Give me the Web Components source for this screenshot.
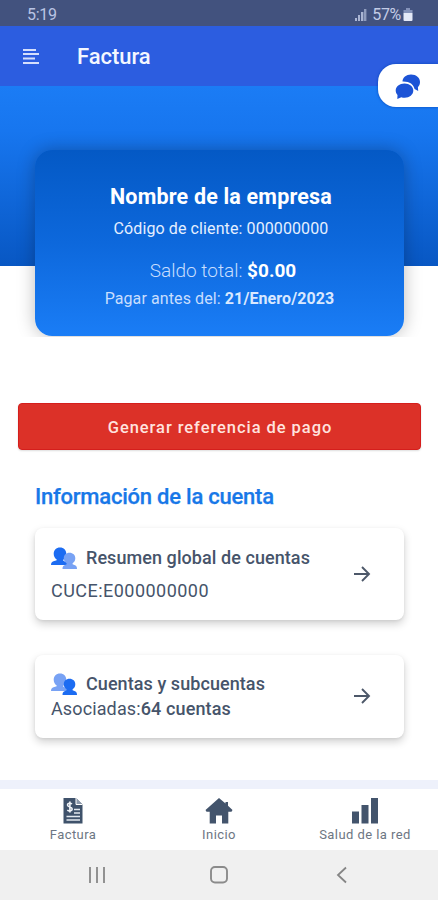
<!DOCTYPE html>
<html lang="es"><head><meta charset="utf-8"><title>Factura</title>
<style>
body{margin:0;width:438px;height:900px;overflow:hidden;background:#fff;font-family:Roboto,"Liberation Sans",sans-serif}
</style></head><body><billing-app></billing-app>
<script>
const define=(name,html)=>customElements.define(name,class extends HTMLElement{
  constructor(){super();const t=document.createElement('template');t.innerHTML=html;
  this.attachShadow({mode:'open'}).append(t.content.cloneNode(true));}
});

define('status-bar',`<style>
:host{display:flex;height:26px;box-sizing:border-box;padding:3px 25px 0 27px;background:#42527e;color:#b9c4e4;justify-content:space-between;align-items:center;font-size:16px;line-height:23px}
.time{letter-spacing:-.3px}.right{display:flex;align-items:center;gap:5px;letter-spacing:-.3px;color:#c3cce6}
.pct{display:flex;align-items:center;gap:2px}
svg{display:block}
</style><span class="time">5:19</span><span class="right">
<svg width="13" height="13" viewBox="0 0 13 13" fill="#aab5d3"><path d="M1 10h2v3H1zM4 7h2v6H4zM7 4h2.400v9H7z"/><path d="M10 1h2.400v12H10z" opacity=".75"/></svg>
<span class="pct"><span>57%</span><svg width="10" height="13" viewBox="0 0 10 13"><path d="M3 0h4v2h2.500v3h-9V2H3z" fill="#8492b9"/><path d="M.5 5h9v7q0 1-1 1h-7q-1 0-1-1z" fill="#e4e9f7"/></svg></span></span>`);

define('app-header',`<style>
:host{display:flex;position:relative;z-index:2;height:60px;box-sizing:border-box;padding:1px 0 0 22px;align-items:center;background:#2c5de0;color:#fff}
h1{margin:0 0 0 37px;font-size:22px;line-height:28px;font-weight:500;letter-spacing:-.05px;color:#f4f7ff}
svg{display:block}
.chat{position:absolute;right:0;top:38px;width:60px;height:43px;box-sizing:border-box;background:#fff;border-radius:18px 0 0 18px;padding:9px 0 0 17px;box-shadow:0 0 3px #0645b8}
</style><svg width="18" height="18" viewBox="0 0 18 18" fill="#d5dffc"><path d="M1 1h13v2H1zM1 5h16v2H1zM1 9.500h12v2H1zM1 14h16v2H1z"/></svg><h1><slot></slot></h1>
<div class="chat"><svg width="26" height="27" viewBox="0 0 26 27" fill="#1c53d6"><path d="M16 1.500c5.300 0 9 3.300 9 7.500 0 2.200-.8 3.800-2.100 5.200l.3 3.800-3.600-2C18.500 11.500 14.800 8.300 7.500 8.500 7.600 4.500 11.200 1.500 16 1.500z"/><path d="M9.500 10.500c5 0 8.800 2.900 8.800 7 0 4.200-3.800 7.200-8.600 7.200-1.300 0-2.300-.1-3.400-.5L2.300 26l.2-4.100C1.400 20.700.7 19.200.7 17.500c0-4.100 3.800-7 8.800-7z"/></svg></div>`);

define('balance-hero',`<style>
:host{display:block;height:251px;box-sizing:border-box;padding:64px 34px 0 35px;overflow:hidden;background:linear-gradient(#1b7cf5 0,#1776ef 25%,#0857c3 100%) 0 0/100% 180px no-repeat}
article{height:186px;box-sizing:border-box;padding:34px 0 0 3px;border-radius:17px;background:linear-gradient(#0459c5,#0d68dc 50%,#1a7df6);box-shadow:0 0 18px #0004;text-align:center;color:#fff}
.name{font-size:21.500px;line-height:26px;font-weight:700;letter-spacing:.18px}
.code{font-size:16px;line-height:20px;margin-top:9px;color:#e5efff;letter-spacing:.1px}
.total{font-size:19px;line-height:24px;margin-top:20px;padding-left:4px;color:#c8defe;font-weight:300}
.due{font-size:16px;line-height:20px;margin-top:6px;padding-right:3px;color:#c8defe;letter-spacing:.1px}
.total b{color:#fff;font-weight:700}.due b{color:#d9e8ff;font-weight:700}
</style><article><div class="name">Nombre de la empresa</div><div class="code">Código de cliente: 000000000</div><div class="total">Saldo total: <b>$0.00</b></div><div class="due">Pagar antes del: <b>21/Enero/2023</b></div></article>`);

define('pay-button',`<style>
:host{display:block;margin:66px 17px 0 18px}
button{display:block;width:100%;height:47px;padding:1px 0 0 1px;box-sizing:border-box;border:1px solid #d51e1c;border-radius:4px;background:#dc3128;color:#ffe3df;font:500 16.500px Roboto,sans-serif;letter-spacing:.94px;box-shadow:0 1px 2px #0002}
</style><button><slot></slot></button>`);

define('people-icon',`<style>:host{display:block;--a:#1c6cf2;--b:#78a2f4}:host([alt]){--a:#78a2f4;--b:#1c6cf2}svg{display:block}</style>
<svg width="26" height="23" viewBox="0 0 26 23"><path d="M9 .5c3.800 0 6.300 2.600 6.300 6.200 0 2.500-1.100 4.600-3 6v1.100l4 2V18H0c0-2.400 1-3.200 2.500-3.700L5.700 13.300v-.8C3.800 11.200 2.700 9.200 2.700 6.700 2.700 3.100 5.200.5 9 .5z" fill="var(--a)"/><path d="M18.500 5.800c3.400 0 5.800 2.300 5.800 5.500 0 2.200-1 3.900-2.700 5v1l2.400.9c1.300.5 2 1.300 2 3.800H11.500c0-2.500.7-3.300 2-3.800l2.100-.9v-1c-1.800-1.100-2.800-2.800-2.800-5 0-3.200 2.300-5.500 5.700-5.500z" fill="var(--b)"/></svg>`);

define('account-card',`<style>
:host{display:flex;box-sizing:border-box;height:var(--h);padding:var(--pt) 33px 0 16px;border-radius:8px;background:#fff;box-shadow:0 4px 9px #0000002e,0 1px 3px #00000010;color:#46546a;justify-content:space-between}
.head{display:flex;align-items:center;gap:9px;font-size:18px;line-height:24px;font-weight:500;letter-spacing:.07px}
.sub{font-size:18px;line-height:24px;margin-top:var(--gap);letter-spacing:var(--ls)}
svg{display:block;margin-top:var(--arrow)}
</style><div><div class="head"><slot name="icon"></slot><slot name="title"></slot></div><div class="sub"><slot></slot></div></div>
<svg width="18" height="18" viewBox="0 0 18 18" fill="none" stroke="#4d5869" stroke-width="1.900"><path d="M1 9h15M9 2l7 7-7 7"/></svg>`);

define('tab-item',`<style>:host{display:flex;flex-direction:column;align-items:center;gap:2px;font-size:13px;line-height:18px;letter-spacing:.43px;color:#6d7683}::slotted(svg){display:block}</style><slot name="icon"></slot><span><slot></slot></span>`);

define('tab-bar',`<style>:host{display:grid;grid-template-columns:repeat(3,1fr);height:70px;box-sizing:border-box;border-top:9px solid #eef1fb;padding-top:8px;background:#fff}</style><slot></slot>`);

define('system-nav',`<style>:host{display:grid;grid-template-columns:repeat(3,122.500px);justify-content:center;justify-items:center;height:50px;align-items:center;background:#f0f0f0}svg{display:block}</style>
<svg width="20" height="18" viewBox="0 0 20 18" fill="#929292"><path d="M2 1h2v16H2zM9 1h2v16H9zM16 1h2v16h-2z"/></svg>
<svg width="20" height="20" viewBox="0 0 20 20"><rect x="2" y="2" width="16" height="15.500" rx="4" fill="none" stroke="#8b8b8b" stroke-width="1.900"/></svg>
<svg width="18" height="18" viewBox="0 0 18 18" fill="none" stroke="#858585" stroke-width="1.800"><path d="M13 1.500L5 9l8 7.500"/></svg>`);

define('billing-app',`<style>
:host{display:flex;flex-direction:column;width:438px;height:900px}
main{flex:1;min-height:0}
h2{margin:34px 0 0 35px;font-size:22px;line-height:26px;font-weight:500;color:#1878e8;letter-spacing:-.23px;-webkit-text-stroke:.25px #1878e8}
.cards{display:grid;gap:35px;padding:18px 34px 0 35px}
.first{--h:92px;--pt:18px;--gap:9px;--arrow:19px;--ls:.47px}.second{--h:83px;--pt:17px;--gap:1px;--arrow:15px;--ls:.12px}
b{font-weight:500}
</style>
<status-bar></status-bar><app-header>Factura</app-header>
<main><balance-hero></balance-hero><pay-button>Generar referencia de pago</pay-button>
<h2>Información de la cuenta</h2>
<section class="cards">
<account-card class="first"><people-icon slot="icon"></people-icon><span slot="title">Resumen global de cuentas</span><span>CUCE:E000000000</span></account-card>
<account-card class="second"><people-icon slot="icon" alt></people-icon><span slot="title">Cuentas y subcuentas</span><span>Asociadas:<b>64 cuentas</b></span></account-card>
</section></main>
<tab-bar>
<tab-item><svg slot="icon" width="26" height="27" viewBox="0 0 26 27"><path d="M3.500 1H16l6.500 6.500V26.500h-19z" fill="#3f526b"/><path d="M16 1v6.500h6.500" fill="#8b98aa" stroke="#fff" stroke-width="1"/><path d="M14 12.500h6M14 16h6M6.500 19.500h13.500M6.500 23h13.500" stroke="#e3e9f0" stroke-width="1.400"/><path d="M12 7C10.500 5.800 7.500 6 7.500 8.100c0 2.500 4.700 1.500 4.700 4 0 2.200-3.200 2.400-4.900 1.100M9.900 4.500v11" fill="none" stroke="#f2f5f9" stroke-width="1.600"/></svg>Factura</tab-item>
<tab-item><svg slot="icon" width="28" height="27" viewBox="0 0 28 27" fill="#43546c"><path d="M14 1l6.500 5.600V5h2.500v3.800l4.500 4.200-1 1.700h-3.200V26.500H17v-8h-6v8H4.700V14.700H1.500L.5 13z"/></svg>Inicio</tab-item>
<tab-item><svg slot="icon" width="26" height="27" viewBox="0 0 26 27" fill="#43546c"><path d="M0 14.500h7v12H0zM9.500 8h7v18.500h-7zM19 1h7v25.500h-7z"/></svg>Salud de la red</tab-item>
</tab-bar><system-nav></system-nav>`);
</script></body></html>
